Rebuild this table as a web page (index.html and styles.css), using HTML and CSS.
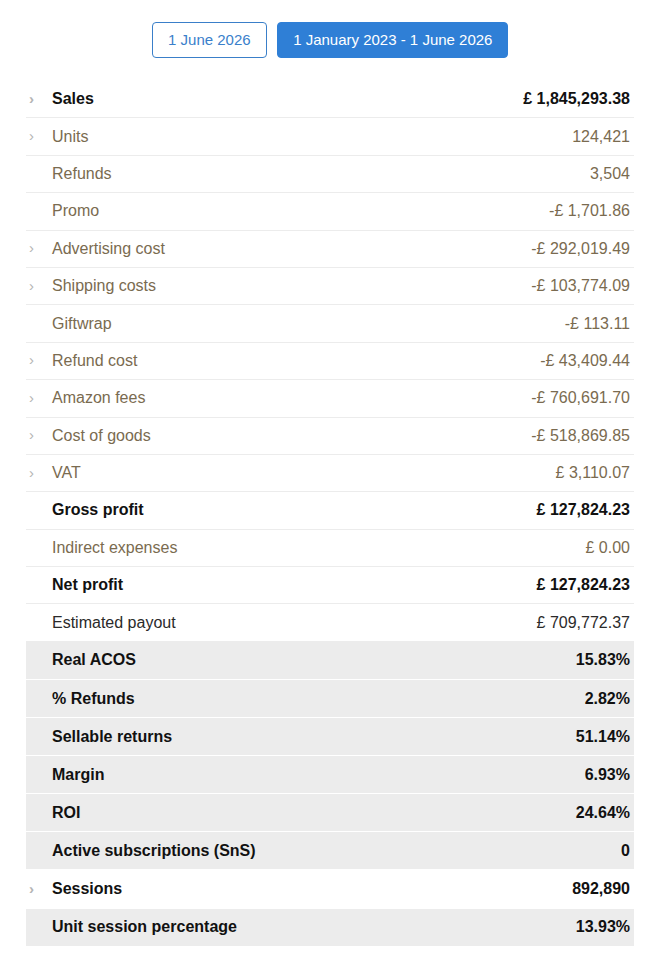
FILE: index.html
```html
<!DOCTYPE html>
<html>
<head>
<meta charset="utf-8">
<link rel="stylesheet" href="styles.css">
</head>
<body>
<div class="page">
  <div class="toolbar">
    <button class="btn btn-outline">1 June 2026</button>
    <button class="btn btn-primary">1 January 2023 - 1 June 2026</button>
  </div>
  <div class="table">
    <div class="row strong"><span class="chev">›</span><span class="label">Sales</span><span class="value">£ 1,845,293.38</span></div>
    <div class="row muted"><span class="chev">›</span><span class="label">Units</span><span class="value">124,421</span></div>
    <div class="row muted"><span class="chev"></span><span class="label">Refunds</span><span class="value">3,504</span></div>
    <div class="row muted"><span class="chev"></span><span class="label">Promo</span><span class="value">-£ 1,701.86</span></div>
    <div class="row muted"><span class="chev">›</span><span class="label">Advertising cost</span><span class="value">-£ 292,019.49</span></div>
    <div class="row muted"><span class="chev">›</span><span class="label">Shipping costs</span><span class="value">-£ 103,774.09</span></div>
    <div class="row muted"><span class="chev"></span><span class="label">Giftwrap</span><span class="value">-£ 113.11</span></div>
    <div class="row muted"><span class="chev">›</span><span class="label">Refund cost</span><span class="value">-£ 43,409.44</span></div>
    <div class="row muted"><span class="chev">›</span><span class="label">Amazon fees</span><span class="value">-£ 760,691.70</span></div>
    <div class="row muted"><span class="chev">›</span><span class="label">Cost of goods</span><span class="value">-£ 518,869.85</span></div>
    <div class="row muted"><span class="chev">›</span><span class="label">VAT</span><span class="value">£ 3,110.07</span></div>
    <div class="row strong"><span class="chev"></span><span class="label">Gross profit</span><span class="value">£ 127,824.23</span></div>
    <div class="row muted"><span class="chev"></span><span class="label">Indirect expenses</span><span class="value">£ 0.00</span></div>
    <div class="row strong"><span class="chev"></span><span class="label">Net profit</span><span class="value">£ 127,824.23</span></div>
    <div class="row plain"><span class="chev"></span><span class="label">Estimated payout</span><span class="value">£ 709,772.37</span></div>
    <div class="row strong shaded"><span class="chev"></span><span class="label">Real ACOS</span><span class="value">15.83%</span></div>
    <div class="row strong shaded"><span class="chev"></span><span class="label">% Refunds</span><span class="value">2.82%</span></div>
    <div class="row strong shaded"><span class="chev"></span><span class="label">Sellable returns</span><span class="value">51.14%</span></div>
    <div class="row strong shaded"><span class="chev"></span><span class="label">Margin</span><span class="value">6.93%</span></div>
    <div class="row strong shaded"><span class="chev"></span><span class="label">ROI</span><span class="value">24.64%</span></div>
    <div class="row strong shaded"><span class="chev"></span><span class="label">Active subscriptions (SnS)</span><span class="value">0</span></div>
    <div class="row strong tall"><span class="chev">›</span><span class="label">Sessions</span><span class="value">892,890</span></div>
    <div class="row strong shaded"><span class="chev"></span><span class="label">Unit session percentage</span><span class="value">13.93%</span></div>
  </div>
</div>
</body>
</html>
```
FILE: styles.css
```css
* { box-sizing: border-box; }
html, body { margin: 0; padding: 0; background: #ffffff; }
body {
  font-family: "Liberation Sans", Arial, sans-serif;
  font-size: 16px;
  color: #222;
}
.page {
  padding: 22px 26px 0 26px;
}
.toolbar {
  display: flex;
  justify-content: center;
  gap: 10px;
  margin-bottom: 23px;
}
.btn {
  font-family: "Liberation Sans", Arial, sans-serif;
  font-size: 15px;
  height: 36px;
  padding: 0 15.5px;
  border-radius: 4px;
  border: 1px solid #3a7fc9;
  line-height: 34px;
  cursor: pointer;
}
.btn-outline {
  background: #ffffff;
  color: #3a7fcb;
}
.btn-primary {
  background: #2f7fd6;
  border-color: #2f7fd6;
  color: #ffffff;
  padding: 0 15px;
}
.table {
  display: flex;
  flex-direction: column;
}
.row {
  display: flex;
  align-items: center;
  height: 37.4px;
  border-bottom: 1px solid #ececec;
  padding-right: 4px;
}
.chev {
  width: 26px;
  flex: none;
  padding-left: 3px;
  color: #b4b4b4;
  font-size: 15px;
  position: relative;
  top: -1px;
}
.label { flex: 1; }
.value { text-align: right; }
.strong { font-weight: bold; color: #111; }
.muted { color: #7a6b50; }
.plain { color: #2a2a2a; }
.shaded {
  background: #ececec;
  border-bottom: 1px solid #ffffff;
  height: 38.1px;
}
.tall { height: 38.1px; border-bottom: none; }
```
